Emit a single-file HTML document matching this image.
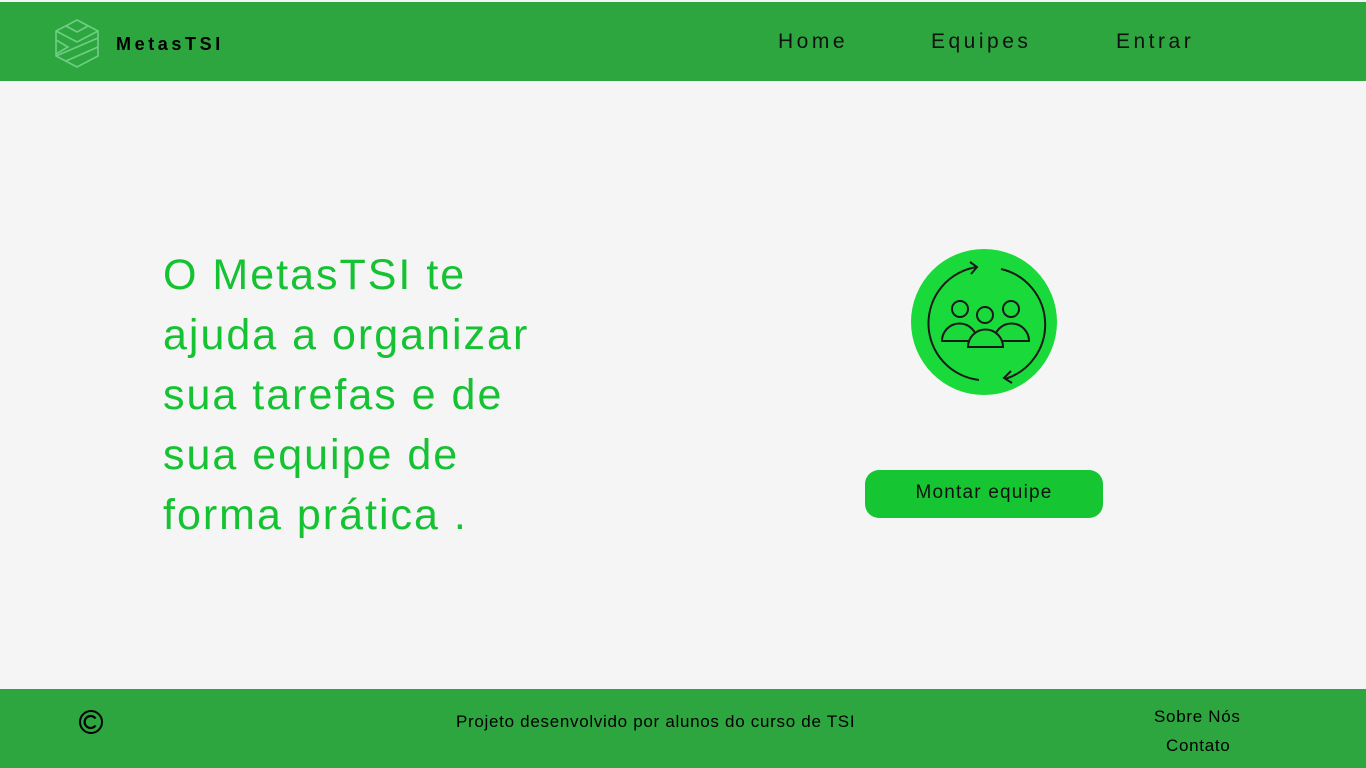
<!DOCTYPE html>
<html><head><meta charset="utf-8"><style>
*{margin:0;padding:0;box-sizing:border-box}
body{width:1366px;height:768px;background:#f5f5f5;font-family:"Liberation Sans",sans-serif;position:relative;overflow:hidden}
.hdr{position:absolute;left:0;top:2px;width:1366px;height:79px;background:#2ea63f}
.logo{position:absolute;left:116px;top:32px;font-weight:bold;font-size:18px;letter-spacing:3.6px;color:#000}
.nav{position:absolute;top:28px;font-size:21px;letter-spacing:3.5px;color:#111}
.hero{position:absolute;left:163px;top:245px;font-size:43px;line-height:60px;color:#14c232;letter-spacing:2px}
.btn{position:absolute;left:865px;top:470px;width:238px;height:48px;border-radius:14px;background:#15c532;color:#111;font-size:19px;text-align:center;line-height:46px;letter-spacing:1.2px}
.ftr{position:absolute;left:0;top:689px;width:1366px;height:79px;background:#2ea63f;color:#000;font-size:17px;letter-spacing:0.7px}
</style></head><body>
<div class="hdr">
<svg style="position:absolute;left:54px;top:16px" width="46" height="50" viewBox="0 0 46 50" fill="none" stroke="#6fce84" stroke-width="1.6">
<path d="M23 2 L44 13 L44 38 L23 49 L2 38 L2 13 Z"/>
<path d="M2 13 L23 24 L44 13"/>
<path d="M12 8 L23 14 L34 8"/>
<path d="M2 22 L14 29 L2 36"/>
<path d="M2 38 L44 20"/>
<path d="M12 43 L44 29"/>
</svg>
<div class="logo">MetasTSI</div>
<div class="nav" style="left:778px">Home</div>
<div class="nav" style="left:931px">Equipes</div>
<div class="nav" style="left:1116px">Entrar</div>
</div>
<div class="hero">O MetasTSI te<br>ajuda a organizar<br>sua tarefas e de<br>sua equipe de<br>forma prática .</div>
<svg style="position:absolute;left:0;top:0" width="1366" height="768">
<circle cx="984" cy="322" r="73" fill="#1ad93a"/>
<g fill="none" stroke="#1a1a1a" stroke-width="2">
<path d="M977 267 A57 57 0 0 0 979 380"/>
<path d="M970 262 L977 267 L971 274"/>
<path d="M1001 269 A57 57 0 0 1 1005 379"/>
<path d="M1011 371 L1004 378 L1012 383"/>
<circle cx="960" cy="309" r="8"/>
<circle cx="1011" cy="309" r="8"/>
<circle cx="985" cy="315" r="8"/>
<path d="M942 341 A17.5 17.5 0 0 1 977 341 Z"/>
<path d="M994 341 A17.5 17.5 0 0 1 1029 341 Z"/>
<path d="M968 347 A17.5 17.5 0 0 1 1003 347 Z" fill="#1ad93a"/>
</g>
</svg>
<div class="btn">Montar equipe</div>
<div class="ftr">
<svg style="position:absolute;left:78px;top:20px" width="26" height="26"><circle cx="13" cy="13" r="11" fill="none" stroke="#000" stroke-width="2"/><path d="M17.5 9.5 A6 6 0 1 0 17.5 16.5" fill="none" stroke="#000" stroke-width="2.2"/></svg>
<div style="position:absolute;left:456px;top:23px">Projeto desenvolvido por alunos do curso de TSI</div>
<div style="position:absolute;left:1154px;top:18px">Sobre Nós</div>
<div style="position:absolute;left:1166px;top:47px">Contato</div>
</div>
</body></html>
